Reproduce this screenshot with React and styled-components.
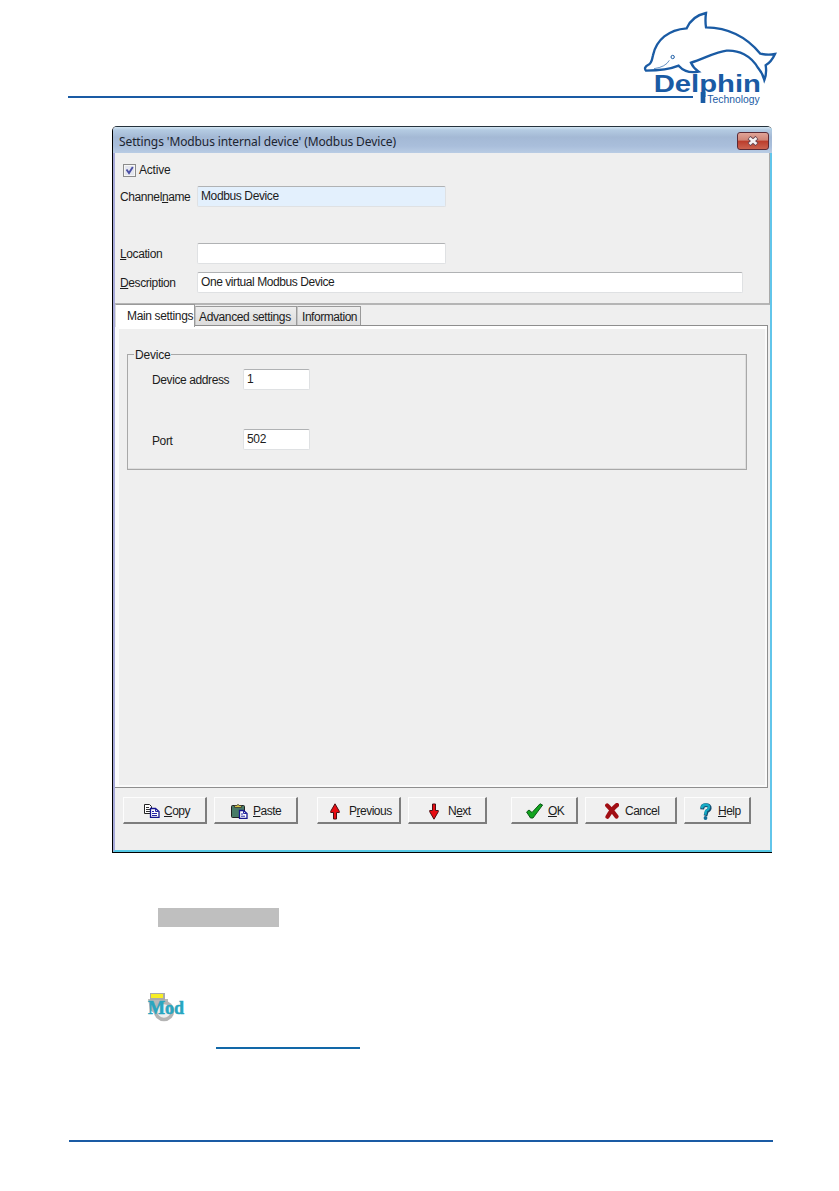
import styled, { createGlobalStyle } from "styled-components"

const GlobalStyle = createGlobalStyle`
  * {
    box-sizing: border-box;
  }
  body {
    margin: 0;
    background: #fff;
    overflow: hidden;
  }
`

const Page = styled.main`
  width: 839px;
  height: 1191px;
  display: flex;
  flex-direction: column;
  font-family: "Liberation Sans", Arial, sans-serif;
  font-size: 12px;
  color: #1c1c1c;
`

const Header = styled.header`
  display: flex;
  height: 126px;
  padding-left: 68px;
`

const HeaderRule = styled.div`
  width: 625px;
  height: 2px;
  margin-top: 96px;
  background: #1a5ba4;
`

const LogoSvg = styled.svg`
  margin-left: -63px;
  width: 160px;
  height: 115px;
`

const Dialog = styled.section`
  width: 660px;
  height: 727px;
  margin-left: 112px;
  display: flex;
  flex-direction: column;
  border: solid;
  border-width: 1px 0 1px 1px;
  border-color: #26323c #000 #000 #000;
  border-radius: 5px 5px 0 0;
  overflow: hidden;
`

const Frame = styled.div`
  flex: 1;
  display: flex;
  flex-direction: column;
  border: solid;
  border-width: 0 2px 2px 2px;
  border-color: #fff #62c5ea #55c8e4 #a6a9d8;
  background: #efefef;
`

const TitleBar = styled.div`
  height: 26px;
  display: flex;
  align-items: center;
  justify-content: space-between;
  padding: 2px 3px 0 6px;
  margin: 0 -2px;
  background: linear-gradient(to bottom, #d3e6f3 0, #b4cbe2 3px, #a4b9d5 10px, #a9bedb 19px, #b9cce4 100%);
`

const DialogTitle = styled.h1`
  margin: 0;
  font-family: "Noto Sans", sans-serif;
  font-size: 12px;
  font-weight: 400;
  letter-spacing: -0.11px;
  color: #1c2430;
`

const CloseButton = styled.button`
  width: 32px;
  height: 18px;
  padding: 0;
  display: flex;
  align-items: center;
  justify-content: center;
  border: 1px solid #5b2a35;
  border-radius: 3px;
  background: linear-gradient(to bottom, #e0a498 0, #d08577 45%, #bb3c2b 50%, #cb6350 100%);
`

const Form = styled.div`
  height: 152px;
  padding: 10px 0 0 5px;
  display: flex;
  flex-direction: column;
  border-right: 1px solid #a9a9a9;
  border-bottom: 2px solid #b5b5b5;
`

const CheckRow = styled.label`
  display: flex;
  align-items: center;
  gap: 3px;
  height: 14px;
  padding-left: 3px;
`

const CheckBox = styled.span`
  width: 13px;
  height: 13px;
  display: flex;
  border: 1px solid #8b8b8b;
  background: #e4e6ee;
  box-shadow: inset 0 0 0 1px #f6f6f6;
`

const Row = styled.div`
  display: flex;
  align-items: center;
  height: 21px;
  margin-top: ${({ $top }) => $top}px;
`

const Label = styled.span`
  width: ${({ $width }) => $width}px;
  padding-top: ${({ $drop }) => $drop ?? 2}px;
  white-space: nowrap;
  letter-spacing: ${({ $spacing }) => $spacing ?? -0.4}px;
`

const Input = styled.input`
  width: ${({ $width }) => $width}px;
  height: 21px;
  padding: 0 3px 2px;
  border: 1px solid #dfe1e3;
  border-top-color: #b0b2b4;
  border-radius: 2px;
  background: ${({ $focused }) => ($focused ? "#e3f0fd" : "#fff")};
  font: inherit;
  letter-spacing: ${({ $spacing }) => $spacing || 0}px;
  color: #1c1c1c;
  outline: none;
`

const TabList = styled.div`
  display: flex;
  align-items: flex-end;
  height: 20px;
`

const Tab = styled.div`
  width: ${({ $width }) => $width}px;
  height: 19px;
  padding: 3px 0 0 ${({ $inset }) => $inset}px;
  white-space: nowrap;
  letter-spacing: ${({ $spacing }) => $spacing || 0}px;
  border: 1px solid #9a9a9a;
  border-bottom: none;
  border-left-color: #c4c4c4;
  background: linear-gradient(to bottom, #eee, #dcdcdc);

  ${({ $active }) =>
    $active &&
    `
    height: 23px;
    margin-bottom: -2px;
    padding-top: 4px;
    border-left-color: #ddd;
    background: #fff;
    z-index: 1;
  `}
`

const TabPanel = styled.div`
  flex: 1;
  margin: 0 2px 0 0;
  padding: 21px 18px 0 8px;
  border: 1px solid #8e8e8e;
  border-left: none;
  box-shadow: inset 4px 0 0 #fcfcfc, inset 0 3px 0 #fff, inset -2px -2px 0 #fafafa;
`

const Group = styled.fieldset`
  width: 620px;
  height: 123px;
  margin: 0 0 0 4px;
  padding: 3px 0 0 24px;
  border: 1px solid #a8a8a8;
  box-shadow: inset -1px -1px 0 #dedede;

  legend {
    margin-left: -18px;
    padding: 0 1px;
    height: 14px;
    line-height: 16px;
    letter-spacing: -0.2px;
  }
`

const ButtonBar = styled.footer`
  display: flex;
  height: 62px;
  padding: 9px 0 0 8px;
`

const Button = styled.button`
  width: ${({ $width }) => $width}px;
  height: 27px;
  margin-left: ${({ $before }) => $before || 0}px;
  padding: 2px 0 0 ${({ $inset }) => $inset}px;
  display: flex;
  align-items: center;
  gap: ${({ $gap }) => $gap}px;
  border: solid;
  border-width: 1px 2px 2px 1px;
  border-color: #fdfdfd #7d7d7d #7d7d7d #fdfdfd;
  background: #f0f0f0;
  font: inherit;
  letter-spacing: -0.5px;
  color: #1c1c1c;

  svg {
    flex: none;
  }
`

const Notes = styled.div`
  display: flex;
  flex-direction: column;
  flex: 1;
`

const GreyBar = styled.div`
  width: 121px;
  height: 19px;
  margin: 55px 0 0 158px;
  background: #bfbfbf;
`

const ModIcon = styled.svg`
  width: 40px;
  height: 32px;
  margin: 64px 0 0 146px;
`

const LinkRule = styled.div`
  width: 144px;
  height: 2px;
  margin: 24px 0 0 216px;
  background: #1268a8;
`

const FooterRule = styled.div`
  width: 704px;
  height: 2px;
  margin: auto 0 49px 69px;
  background: #1a5ba4;
`

function Logo() {
  return (
    <LogoSvg viewBox="0 0 480 345">
      <g fill="none" stroke="#1a5ba4" strokeWidth="7" strokeLinejoin="miter">
        <path d="M48 212 Q40 203 54 195 C67 189 65 179 69 166 C79 119 116 89 170 85 C180 62 200 45 228 39 C226 54 226 69 228 82 C300 83 350 111 391 161 Q414 166 435 162 Q424 186 407 196 Q411 220 403 240 Q398 220 385 205 C362 165 325 150 290 152 C260 155 225 174 183 188 Q190 204 206 215 Q168 222 146 197 Q110 212 48 212 Z" />
        <path d="M72 206 Q107 201 118 181" strokeWidth="2" />
        <circle cx="128" cy="171" r="5" strokeWidth="3" />
      </g>
      <g fill="#1a5ba4" fontFamily="Liberation Sans, Arial, sans-serif">
        <text x="71" y="277" fontSize="72" fontWeight="700" textLength="322" lengthAdjust="spacingAndGlyphs">
          Delphin
        </text>
        <rect x="212" y="276" width="14" height="33" />
        <text x="232" y="308" fontSize="30" textLength="157" lengthAdjust="spacingAndGlyphs">
          Technology
        </text>
      </g>
    </LogoSvg>
  )
}

function CloseIcon() {
  return (
    <svg width="12" height="10" viewBox="0 0 12 10">
      <path d="M2 1.500 L10 8.500 M10 1.500 L2 8.500" stroke="#6b4650" strokeWidth="4.400" />
      <path d="M2.500 2 L9.500 8 M9.500 2 L2.500 8" stroke="#f5f2f4" strokeWidth="2.600" />
    </svg>
  )
}

function CopyIcon() {
  return (
    <svg width="16" height="14" viewBox="0 0 16 14">
      <path d="M.5 .5h5l2 2v7h-7z" fill="#fff" stroke="#222" />
      <path d="M2 3.5h3M2 5.5h4M2 7.5h4" stroke="#333" />
      <path d="M6.500 4.500h5l3.500 3v6h-8.500z" fill="#fff" stroke="#15158c" strokeWidth="1.300" />
      <path d="M11.500 4.500v3h3M8 7.500h2M8 9.500h5M8 11.500h5" fill="none" stroke="#2525a5" />
    </svg>
  )
}

function PasteIcon() {
  return (
    <svg width="17" height="15" viewBox="0 0 17 15">
      <rect x=".5" y="1.500" width="13" height="12" rx="1" fill="#477b67" stroke="#222" />
      <path d="M3.500 3.500h7v-2h-2q-1.500-2-3 0h-2z" fill="#d5c64a" stroke="#333" strokeWidth=".8" />
      <path d="M8.500 6.500h4l3.500 3v5h-7.500z" fill="#fff" stroke="#15158c" strokeWidth="1.300" />
      <path d="M12.500 6.500v3h3M10 10h2M10 12.200h4" fill="none" stroke="#2525a5" />
    </svg>
  )
}

function ArrowIcon({ down }) {
  return (
    <svg width="10" height="17" viewBox="0 0 10 17">
      <path
        d="M5 .8 L9.300 8.300 V9.500 H6.500 V16 H3.500 V9.500 H.7 V8.300 Z"
        fill="#e80c12"
        stroke="#4b1014"
        transform={down ? "rotate(180 5 8.5)" : undefined}
      />
    </svg>
  )
}

function CheckIcon() {
  return (
    <svg width="17" height="16" viewBox="0 0 17 16">
      <path d="M.6 9 L3 7 L6 9.500 L14 .8 L16.600 2 L7 15 H4.500 Z" fill="#12a51f" stroke="#0d5918" />
    </svg>
  )
}

function CrossIcon() {
  return (
    <svg width="14" height="16" viewBox="0 0 14 16">
      <path d="M2.200 2.500 Q6 6 11.500 13.500 M12 2 Q7 6 2.500 13.800" fill="none" stroke="#a10e14" strokeWidth="4.200" strokeLinecap="round" />
    </svg>
  )
}

function HelpIcon() {
  return (
    <svg width="12" height="17" viewBox="0 0 12 17">
      <g fill="none" strokeLinecap="square">
        <path d="M2.300 4.500 Q2.500 2.200 6 2.200 Q10 2.200 9.700 5 Q9.500 7 6.800 8.300 L6 11" stroke="#124c70" strokeWidth="3.800" />
        <path d="M2 4 Q2.500 1.700 5.700 1.700 Q9.200 1.700 9 4.500 Q8.800 6.500 6 8 L5.500 10.500" stroke="#16abc5" strokeWidth="2.400" />
      </g>
      <circle cx="5.500" cy="15" r="1.900" fill="#126c98" />
    </svg>
  )
}

function App() {
  return (
    <Page>
      <GlobalStyle />
      <Header>
        <HeaderRule />
        <Logo />
      </Header>

      <Dialog>
        <Frame>
          <TitleBar>
            <DialogTitle>Settings 'Modbus internal device' (Modbus Device)</DialogTitle>
            <CloseButton aria-label="Close">
              <CloseIcon />
            </CloseButton>
          </TitleBar>

          <Form>
            <CheckRow>
              <CheckBox>
                <svg width="11" height="11" viewBox="0 0 11 11">
                  <path d="M2.500 4.500 L5 8 L8.800 2" fill="none" stroke="#4b50a5" strokeWidth="1.900" />
                </svg>
              </CheckBox>
              <Label $drop={0} $spacing={-0.2}>Active</Label>
            </CheckRow>
            <Row $top={9}>
              <Label $width={77} $drop={1}>Channel<u>n</u>ame</Label>
              <Input $width={249} $focused $spacing={-0.38} defaultValue="Modbus Device" />
            </Row>
            <Row $top={36}>
              <Label $width={77} $drop={1}><u>L</u>ocation</Label>
              <Input $width={249} />
            </Row>
            <Row $top={8}>
              <Label $width={77} $drop={1}><u>D</u>escription</Label>
              <Input $width={546} $spacing={-0.43} defaultValue="One virtual Modbus Device" />
            </Row>
          </Form>

          <TabList>
            <Tab $width={80} $inset={11} $active $spacing={-0.35}>Main settings</Tab>
            <Tab $width={102} $inset={3} $spacing={-0.37}>Advanced settings</Tab>
            <Tab $width={64} $inset={4} $spacing={-0.45}>Information</Tab>
          </TabList>
          <TabPanel>
            <Group>
              <legend>Device</legend>
              <Row $top={5}>
                <Label $width={91} $drop={1}>Device address</Label>
                <Input $width={67} defaultValue="1" />
              </Row>
              <Row $top={39}>
                <Label $width={91} $drop={3}>Port</Label>
                <Input $width={67} $spacing={-0.3} defaultValue="502" />
              </Row>
            </Group>
          </TabPanel>

          <ButtonBar>
            <Button $width={84} $inset={20} $gap={4}><CopyIcon /><span><u>C</u>opy</span></Button>
            <Button $width={84} $before={7} $inset={16} $gap={5}><PasteIcon /><span><u>P</u>aste</span></Button>
            <Button $width={84} $before={19} $inset={12} $gap={9}><ArrowIcon /><span>P<u>r</u>evious</span></Button>
            <Button $width={79} $before={7} $inset={20} $gap={9}><ArrowIcon down /><span>N<u>e</u>xt</span></Button>
            <Button $width={67} $before={24} $inset={14} $gap={5}><CheckIcon /><span><u>O</u>K</span></Button>
            <Button $width={92} $before={7} $inset={19} $gap={6}><CrossIcon /><span>Cancel</span></Button>
            <Button $width={67} $before={7} $inset={15} $gap={6}><HelpIcon /><span><u>H</u>elp</span></Button>
          </ButtonBar>
        </Frame>
      </Dialog>

      <Notes>
        <GreyBar />
        <ModIcon viewBox="0 0 40 32">
          <path d="M2 8h20v14H8l-4-3z" fill="#b9b9b9" />
          <circle cx="18" cy="20" r="8.500" fill="#eee" stroke="#b4b4b4" strokeWidth="3.500" />
          <rect x="4" y="2" width="15" height="7" fill="#aaa" />
          <rect x="5" y="3" width="12" height="4" fill="#f7ee25" />
          <text x="2" y="22.500" fontFamily="Liberation Serif, serif" fontWeight="700" fontSize="18" textLength="36" lengthAdjust="spacingAndGlyphs" fill="#28a5c0" stroke="#28a5c0" strokeWidth=".5">
            Mod
          </text>
        </ModIcon>
        <LinkRule />
        <FooterRule />
      </Notes>
    </Page>
  )
}

export default App
